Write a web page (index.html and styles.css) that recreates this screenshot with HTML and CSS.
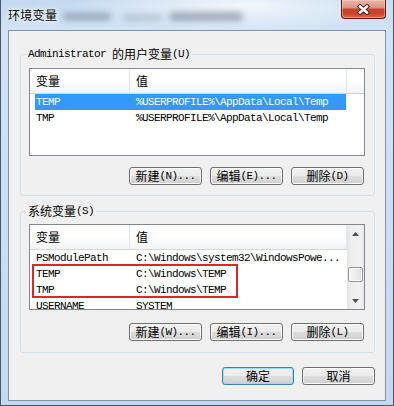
FILE: index.html
```html
<!DOCTYPE html>
<html lang="zh-CN">
<head>
<meta charset="utf-8">
<title>环境变量</title>
<link rel="stylesheet" href="styles.css">
</head>
<body>
<div class="window">
  <header class="titlebar">
    <span class="glass g1"></span>
    <span class="glass g2"></span>
    <span class="glass g3"></span>
    <span class="title">环境变量</span>
    <button class="close-btn" type="button" aria-label="关闭">
      <svg width="13" height="11" viewBox="0 0 13 11"><path class="x-outline" d="M3 2.5 L10 8.5 M10 2.5 L3 8.5"/><path class="x-fill" d="M3 2.5 L10 8.5 M10 2.5 L3 8.5"/></svg>
    </button>
  </header>
  <main class="client">
    <fieldset class="group group-user">
      <legend><span class="mono">Administrator </span>的用户变量<span class="mono">(U)</span></legend>
      <div class="list list-user">
        <div class="list-body">
          <div class="lv-header">
            <div class="hcol hc1">变量</div>
            <div class="hcol hc2">值</div>
          </div>
          <div class="lv-rows">
            <div class="row selected"><span class="cell k">TEMP</span><span class="cell v">%USERPROFILE%\AppData\Local\Temp</span></div>
            <div class="row"><span class="cell k">TMP</span><span class="cell v">%USERPROFILE%\AppData\Local\Temp</span></div>
          </div>
        </div>
      </div>
      <div class="btn-row">
        <button class="btn" type="button">新建<span class="mono">(N)...</span></button>
        <button class="btn" type="button">编辑<span class="mono">(E)...</span></button>
        <button class="btn" type="button">删除<span class="mono">(D)</span></button>
      </div>
    </fieldset>

    <fieldset class="group group-sys">
      <legend>系统变量<span class="mono">(S)</span></legend>
      <div class="list list-sys">
        <div class="list-body">
          <div class="lv-header">
            <div class="hcol hc1">变量</div>
            <div class="hcol hc2">值</div>
          </div>
          <div class="lv-rows">
            <div class="row"><span class="cell k">PSModulePath</span><span class="cell v">C:\Windows\system32\WindowsPowe...</span></div>
            <div class="row"><span class="cell k">TEMP</span><span class="cell v">C:\Windows\TEMP</span></div>
            <div class="row"><span class="cell k">TMP</span><span class="cell v">C:\Windows\TEMP</span></div>
            <div class="row"><span class="cell k">USERNAME</span><span class="cell v">SYSTEM</span></div>
          </div>
        </div>
        <div class="scrollbar">
          <div class="sb-btn"><svg width="7" height="4" viewBox="0 0 7 4"><polygon points="0,4 3.5,0 7,4" class="sb-arrow"/></svg></div>
          <div class="sb-track"><div class="sb-thumb"></div></div>
          <div class="sb-btn"><svg width="7" height="4" viewBox="0 0 7 4"><polygon points="0,0 3.5,4 7,0" class="sb-arrow"/></svg></div>
        </div>
        <div class="annotation"></div>
      </div>
      <div class="btn-row">
        <button class="btn" type="button">新建<span class="mono">(W)...</span></button>
        <button class="btn" type="button">编辑<span class="mono">(I)...</span></button>
        <button class="btn" type="button">删除<span class="mono">(L)</span></button>
      </div>
    </fieldset>

    <div class="footer">
      <button class="btn btn-default" type="button">确定</button>
      <button class="btn btn-cancel" type="button">取消</button>
    </div>
  </main>
</div>
</body>
</html>
```

FILE: styles.css
```css
* { box-sizing: border-box; }
html, body { margin: 0; padding: 0; }
body {
  width: 394px;
  height: 406px;
  overflow: hidden;
  font-family: "Noto Sans CJK SC", "Liberation Sans", sans-serif;
  font-size: 12px;
  color: #000;
  background: #c4d8ef;
}

.window {
  position: relative;
  width: 394px;
  height: 406px;
  border: 1px solid #44586f;
  border-top: 0;
  background:
    radial-gradient(ellipse 170px 26px at 240px 6px, rgba(255,255,255,.8), rgba(255,255,255,0)),
    linear-gradient(180deg, #c3d9f0 0px, #d2e3f5 30px, #c4d9ef 100%);
}

.titlebar {
  position: relative;
  height: 30px;
}
.title {
  position: relative;
  display: block;
  padding: 7px 0 0 7px;
  line-height: 16px;
  font-size: 12px;
  letter-spacing: 0.3px;
  text-shadow: 0 0 6px #fff, 0 0 3px #fff;
}
.glass {
  position: absolute;
  border-radius: 4px;
  filter: blur(3px);
}
.g1 { left: 62px; top: 13px; width: 48px; height: 7px; background: rgba(85,95,110,.45); }
.g2 { left: 122px; top: 14px; width: 40px; height: 7px; background: rgba(110,120,135,.3); }
.g3 { left: 168px; top: 12px; width: 74px; height: 9px; background: rgba(85,95,110,.45); }

.close-btn {
  position: absolute;
  top: 0;
  right: 7px;
  width: 45px;
  height: 19px;
  padding: 0;
  border: 1px solid #5b1d12;
  border-top: 0;
  border-radius: 0 0 4px 4px;
  background: linear-gradient(180deg, #eab7ab 0%, #de9482 42%, #c3432b 52%, #c6432b 75%, #db6a45 100%);
  box-shadow: inset 0 0 0 1px rgba(255,215,200,.45);
  display: flex;
  align-items: center;
  justify-content: center;
}
.x-outline { stroke: #3d2724; stroke-width: 4.4; fill: none; stroke-linecap: square; }
.x-fill { stroke: #fff; stroke-width: 2.4; fill: none; stroke-linecap: square; }

.client {
  margin: 0 7px;
  height: 371px;
  border: 1px solid #8193a8;
  background: #f0f0f0;
  padding: 16px 10px 0 11px;
}

.group {
  margin: 0;
  padding: 7px 9px 10px 8px;
  border: 1px solid #d5dfe5;
  border-radius: 3px;
  min-width: 0;
}
.group legend {
  height: 14px;
  margin-left: -3px;
  padding: 0 2px;
  line-height: 14px;
  font-size: 12px;
  white-space: nowrap;
}
.group legend .mono { vertical-align: top; line-height: 14px; }
.group-sys {
  margin-top: 8px;
  padding-top: 6px;
  padding-bottom: 11px;
}

.mono {
  font-family: "Liberation Mono", "DejaVu Sans Mono", monospace;
  font-size: 11px;
  letter-spacing: -0.6px;
}

.list {
  position: relative;
  display: flex;
  width: 336px;
  height: 88px;
  border: 1px solid #828790;
  background: #fff;
}
.list-sys { height: 86px; }
.list-body {
  flex: 1;
  min-width: 0;
  overflow: hidden;
  display: flex;
  flex-direction: column;
}
.lv-header {
  display: flex;
  flex: none;
  height: 25px;
  border-bottom: 1px solid #d5d5d5;
  background: linear-gradient(180deg, #ffffff 0%, #ffffff 45%, #f3f4f6 100%);
}
.hcol {
  height: 24px;
  line-height: 24px;
  padding-left: 6px;
  border-right: 1px solid #e3e8ee;
  font-size: 12px;
}
.hc1 { width: 100px; }
.hc2 { width: 217px; }

.lv-rows {
  flex: 1;
  overflow: hidden;
}
.row {
  display: flex;
  width: 311px;
  height: 16px;
  margin-left: 5px;
  line-height: 16px;
  font-family: "Liberation Mono", "DejaVu Sans Mono", monospace;
  font-size: 11px;
  letter-spacing: -0.6px;
}
.row.selected { background: #3399ff; color: #fff; }
.cell { white-space: nowrap; overflow: hidden; }
.k { width: 95px; padding-left: 1px; }
.v { width: 216px; padding-left: 6px; }

.scrollbar {
  flex: none;
  width: 17px;
  display: flex;
  flex-direction: column;
  background: linear-gradient(90deg, #e4e4e4 0%, #efefef 25%, #f1f1f1 75%, #e9e9e9 100%);
}
.sb-btn {
  flex: none;
  height: 17px;
  display: flex;
  align-items: center;
  justify-content: center;
}
.sb-arrow { fill: #4f4f4f; }
.sb-track { flex: 1; }
.sb-thumb {
  margin: 25px 1px 0 1px;
  height: 15px;
  border: 1px solid #969696;
  border-radius: 2px;
  background: linear-gradient(90deg, #f7f7f7 0%, #ececec 50%, #dedede 100%);
  box-shadow: inset 0 0 0 1px #fbfbfb;
}

.annotation {
  position: absolute;
  left: 2px;
  top: 39px;
  width: 206px;
  height: 34px;
  border: 2px solid #e3232b;
}

.btn-row {
  display: flex;
  justify-content: flex-end;
  gap: 8px;
  height: 18px;
  margin-top: 11px;
  padding-right: 1px;
}
.group-sys .btn-row { margin-top: 13px; }

.btn {
  width: 73px;
  height: 18px;
  padding: 0;
  font-family: "Noto Sans CJK SC", "Liberation Sans", sans-serif;
  font-size: 12px;
  line-height: 16px;
  color: #000;
  border: 1px solid #707070;
  border-radius: 3px;
  background: linear-gradient(180deg, #f2f2f2 0%, #ebebeb 50%, #dddddd 51%, #cfcfcf 100%);
  box-shadow: inset 0 0 0 1px #fbfbfb;
  display: flex;
  align-items: center;
  justify-content: center;
}
.footer {
  display: flex;
  justify-content: flex-end;
  gap: 8px;
  height: 18px;
  margin-top: 14px;
}
.btn-default {
  width: 72px;
  border-color: #3c7fb1;
  box-shadow: inset 0 0 0 1px #9ddcf9;
}
```
